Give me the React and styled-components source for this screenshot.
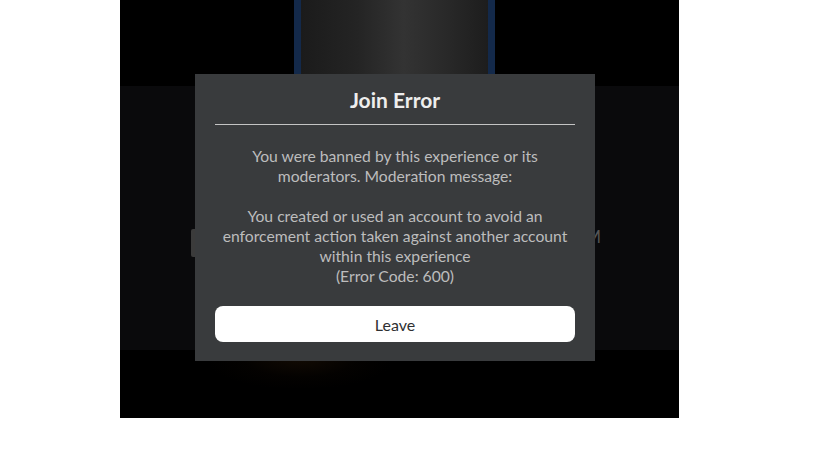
import React from "react";
import styled, { createGlobalStyle } from "styled-components";

const GlobalStyle = createGlobalStyle`
  html, body {
    margin: 0;
    padding: 0;
    background: #ffffff;
  }
  body {
    font-family: Lato, "Noto Sans", "Liberation Sans", sans-serif;
  }
`;

function App() {
  return (
    <Page>
      <GlobalStyle />
      <GameArea>
        <TopStrip>
          <Thumbnail />
        </TopStrip>
        <Band>
          <BandRow>
            <GhostButton />
            <GhostText>M</GhostText>
          </BandRow>
        </Band>
        <Bottom>
          <Glow />
        </Bottom>

        <Modal>
          <Title>Join Error</Title>
          <Divider />
          <Message>
            You were banned by this experience or its moderators. Moderation
            message:
            <br />
            <br />
            You created or used an account to avoid an enforcement action taken
            against another account within this experience
            <br />
            (Error Code: 600)
          </Message>
          <LeaveButton>Leave</LeaveButton>
        </Modal>
      </GameArea>
    </Page>
  );
}

const Page = styled.div`
  padding-left: 120px;
  width: 819px;
  height: 460px;
  box-sizing: border-box;
`;

const GameArea = styled.div`
  position: relative;
  width: 559px;
  height: 418px;
  display: flex;
  flex-direction: column;
  background: #000000;
  overflow: hidden;
`;

const TopStrip = styled.div`
  height: 86px;
  display: flex;
  padding-left: 174px;
  background: #000000;
`;

const Thumbnail = styled.div`
  width: 187px;
  height: 80px;
  border: 7px solid #13294a;
  border-top: none;
  background: linear-gradient(
    90deg,
    #1b1b1b 0%,
    #242424 30%,
    #333333 55%,
    #2a2a2a 75%,
    #1d1d1d 100%
  );
`;

const Band = styled.div`
  height: 264px;
  background: #0a0a0c;
`;

const BandRow = styled.div`
  display: flex;
  justify-content: space-between;
  align-items: flex-start;
  padding: 143px 78px 0 71px;
`;

const GhostButton = styled.div`
  width: 5px;
  height: 28px;
  background: #3b3b3b;
  border-radius: 2px 0 0 2px;
`;

const GhostText = styled.div`
  font-size: 17px;
  line-height: 16px;
  color: #555555;
`;

const Bottom = styled.div`
  flex: 1;
  position: relative;
  background: #000000;
`;

const Glow = styled.div`
  position: absolute;
  left: 90px;
  top: 8px;
  width: 180px;
  height: 30px;
  background: radial-gradient(
    ellipse at 50% 0%,
    rgba(60, 35, 10, 0.3) 0%,
    rgba(30, 15, 5, 0.12) 45%,
    rgba(0, 0, 0, 0) 75%
  );
`;

const Modal = styled.div`
  position: absolute;
  left: 75px;
  top: 74px;
  width: 400px;
  box-sizing: border-box;
  padding: 13px 20px 19px;
  background: #393b3d;
  display: flex;
  flex-direction: column;
`;

const Title = styled.div`
  font-size: 21px;
  line-height: 26px;
  font-weight: 700;
  color: #eeeeee;
  text-align: center;
`;

const Divider = styled.div`
  height: 1px;
  margin-top: 11px;
  background: #c4c4c4;
`;

const Message = styled.div`
  margin-top: 21px;
  font-size: 15.7px;
  line-height: 20px;
  color: #bdbdbd;
  text-align: center;
`;

const LeaveButton = styled.button`
  margin-top: 20px;
  height: 36px;
  border: none;
  border-radius: 8px;
  background: #ffffff;
  color: #2e3032;
  font-family: inherit;
  font-size: 16px;
  cursor: pointer;
`;

export default App;
